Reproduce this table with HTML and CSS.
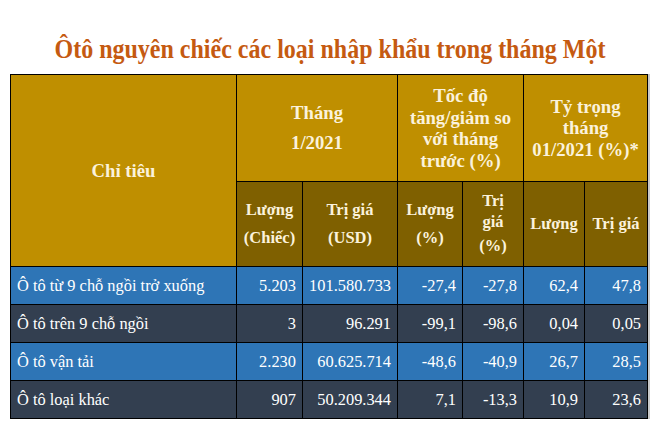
FILE: index.html
```html
<!DOCTYPE html>
<html lang="vi">
<head>
<meta charset="utf-8">
<title>Ôtô nguyên chiếc các loại nhập khẩu trong tháng Một</title>
<link rel="stylesheet" href="styles.css">
</head>
<body>
<div class="page">
  <h1 class="title">Ôtô nguyên chiếc các loại nhập khẩu trong tháng Một</h1>
  <table class="data">
    <colgroup>
      <col class="c-name">
      <col class="c-qty">
      <col class="c-val">
      <col class="c-pq">
      <col class="c-pv">
      <col class="c-sq">
      <col class="c-sv">
    </colgroup>
    <thead>
      <tr class="head-top">
        <th rowspan="2" class="h-main">Chỉ tiêu</th>
        <th colspan="2" class="h-main lh-wide">Tháng<br>1/2021</th>
        <th colspan="2" class="h-main lh-tight">Tốc độ<br>tăng/giảm so<br>với tháng<br>trước (%)</th>
        <th colspan="2" class="h-main lh-tight">Tỷ trọng<br>tháng<br>01/2021 (%)*</th>
      </tr>
      <tr class="head-sub">
        <th class="h-sub lh-mid">Lượng<br>(Chiếc)</th>
        <th class="h-sub lh-mid">Trị giá<br>(USD)</th>
        <th class="h-sub lh-mid">Lượng<br>(%)</th>
        <th class="h-sub"><span class="blk lh-narrow">Trị<br>giá</span><span class="blk lh-pct">(%)</span></th>
        <th class="h-sub">Lượng</th>
        <th class="h-sub">Trị giá</th>
      </tr>
    </thead>
    <tbody>
      <tr class="row-blue">
        <td class="name">Ô tô từ 9 chỗ ngồi trở xuống</td>
        <td>5.203</td><td>101.580.733</td><td>-27,4</td><td>-27,8</td><td>62,4</td><td>47,8</td>
      </tr>
      <tr class="row-dark">
        <td class="name">Ô tô trên 9 chỗ ngồi</td>
        <td>3</td><td>96.291</td><td>-99,1</td><td>-98,6</td><td>0,04</td><td>0,05</td>
      </tr>
      <tr class="row-blue">
        <td class="name">Ô tô vận tải</td>
        <td>2.230</td><td>60.625.714</td><td>-48,6</td><td>-40,9</td><td>26,7</td><td>28,5</td>
      </tr>
      <tr class="row-dark">
        <td class="name">Ô tô loại khác</td>
        <td>907</td><td>50.209.344</td><td>7,1</td><td>-13,3</td><td>10,9</td><td>23,6</td>
      </tr>
    </tbody>
  </table>
</div>
</body>
</html>
```
FILE: styles.css
```css
html, body {
  margin: 0;
  padding: 0;
  background: #ffffff;
}

.page {
  width: 660px;
  height: 432px;
  padding-top: 35px;
  box-sizing: border-box;
  font-family: "Liberation Serif", "Times New Roman", serif;
}

.title {
  margin: 0;
  font-size: 24px;
  line-height: 30px;
  font-weight: bold;
  color: #c55a11;
  text-align: center;
  transform: scaleY(1.15);
  transform-origin: 50% 70%;
}

.data {
  margin: 9px 0 0 10px;
  border-collapse: collapse;
  table-layout: fixed;
  width: 637px;
  border: 1px solid #000;
  box-shadow: 2px 0 0 #c9c9c9;
}

.c-name { width: 226px; }
.c-qty { width: 66px; }
.c-val { width: 95px; }
.c-pq { width: 65px; }
.c-pv { width: 61px; }
.c-sq { width: 61px; }
.c-sv { width: 63px; }

.data th,
.data td {
  border: 1px solid #000;
  padding: 0;
}

.data th {
  font-weight: bold;
  color: #fbf2dc;
  text-align: center;
  vertical-align: middle;
}

.head-top { height: 107px; }
.head-sub { height: 85px; }

.h-main {
  background: #bf8f00;
  font-size: 18.7px;
  line-height: 22px;
}

.h-sub {
  background: #7f6000;
  font-size: 16.5px;
  line-height: 22px;
}

.lh-wide { line-height: 30px; }
.lh-tight { line-height: 21.5px; }
.lh-mid { line-height: 27.7px; }

.blk { display: block; }
.lh-narrow { line-height: 21px; }
.lh-pct { line-height: 27px; }

.data tbody tr { height: 38px; }

.data td {
  font-size: 16.4px;
  color: #ffffff;
  text-align: right;
  padding: 0 6px;
  vertical-align: middle;
  white-space: nowrap;
}

.data td.name {
  text-align: left;
  padding-left: 6px;
}

.row-blue td { background: #2e75b6; }
.row-dark td { background: #333f50; }
```
